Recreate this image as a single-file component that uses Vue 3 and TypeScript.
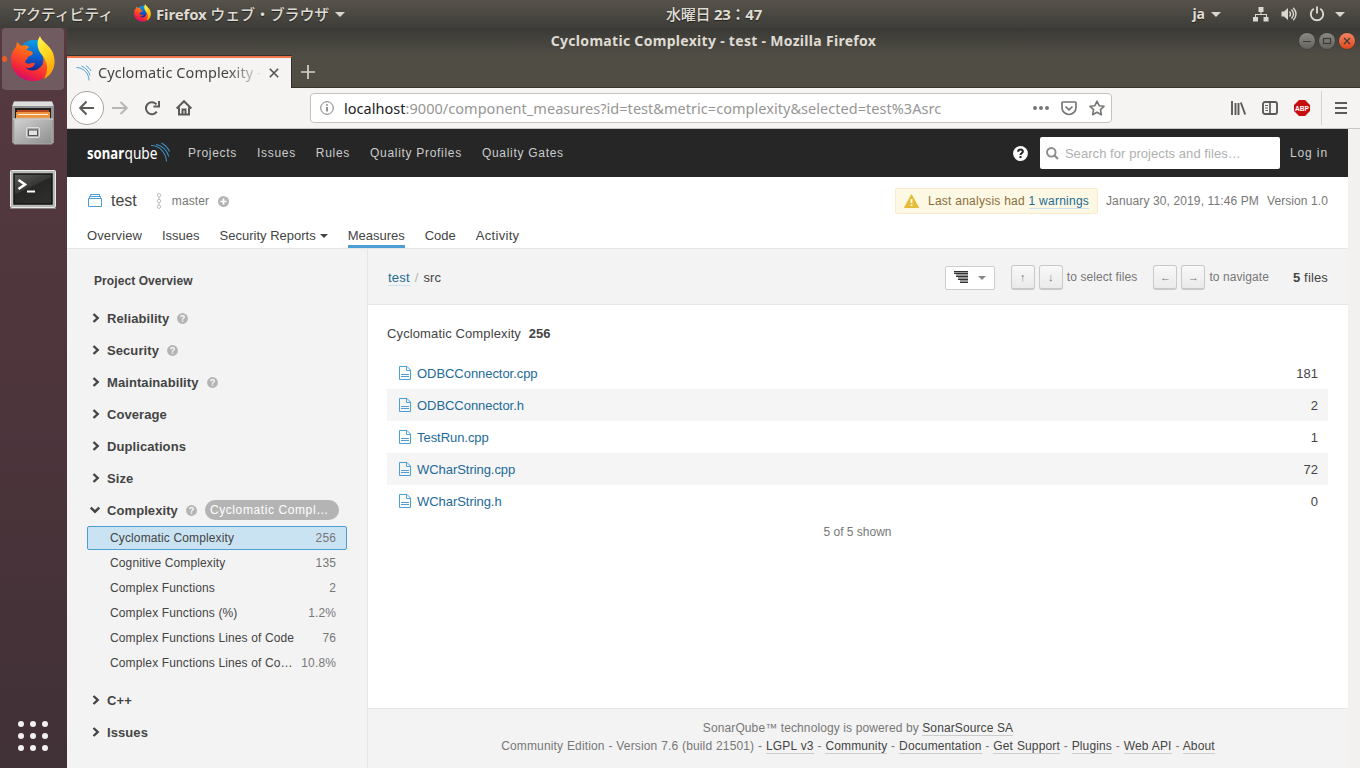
<script setup lang="ts">
interface Facet { name: string; help?: boolean }
interface Metric { name: string; value: string; selected?: boolean }
interface SourceFile { name: string; value: number }

const navItems: string[] = ['Projects', 'Issues', 'Rules', 'Quality Profiles', 'Quality Gates']
const tabs: string[] = ['Overview', 'Issues', 'Security Reports', 'Measures', 'Code', 'Activity']
const facets: Facet[] = [
  { name: 'Reliability', help: true },
  { name: 'Security', help: true },
  { name: 'Maintainability', help: true },
  { name: 'Coverage' },
  { name: 'Duplications' },
  { name: 'Size' },
]
const metrics: Metric[] = [
  { name: 'Cyclomatic Complexity', value: '256', selected: true },
  { name: 'Cognitive Complexity', value: '135' },
  { name: 'Complex Functions', value: '2' },
  { name: 'Complex Functions (%)', value: '1.2%' },
  { name: 'Complex Functions Lines of Code', value: '76' },
  { name: 'Complex Functions Lines of Code (%)', value: '10.8%' },
]
const closingFacets: Facet[] = [{ name: 'C++' }, { name: 'Issues' }]
const files: SourceFile[] = [
  { name: 'ODBCConnector.cpp', value: 181 },
  { name: 'ODBCConnector.h', value: 2 },
  { name: 'TestRun.cpp', value: 1 },
  { name: 'WCharString.cpp', value: 72 },
  { name: 'WCharString.h', value: 0 },
]
const footerLinks: string[] = ['LGPL v3', 'Community', 'Documentation', 'Get Support', 'Plugins', 'Web API', 'About']
</script>

<template>
  <div class="desktop">
    <svg class="defs" width="0" height="0">
      <defs>
        <linearGradient id="fxRed" x1="0.8" y1="0" x2="0.3" y2="1">
          <stop offset="0" stop-color="#ffb000" /><stop offset="0.45" stop-color="#ff5a1f" /><stop offset="0.8" stop-color="#f0203e" /><stop offset="1" stop-color="#c80f7a" />
        </linearGradient>
        <linearGradient id="fxYellow" x1="0.2" y1="0" x2="0.6" y2="1">
          <stop offset="0" stop-color="#fff44f" /><stop offset="0.5" stop-color="#ffd21c" /><stop offset="1" stop-color="#ff9a0a" />
        </linearGradient>
        <linearGradient id="fxBlue" x1="0.5" y1="0" x2="0.4" y2="1">
          <stop offset="0" stop-color="#0a9fe6" /><stop offset="0.5" stop-color="#0b5fd0" /><stop offset="1" stop-color="#1c1a82" />
        </linearGradient>
        <linearGradient id="metal" x1="0" y1="0" x2="1" y2="1">
          <stop offset="0" stop-color="#d2d2d2" /><stop offset="1" stop-color="#8d8d8d" />
        </linearGradient>
        <linearGradient id="screen" x1="0" y1="0" x2="0.6" y2="1">
          <stop offset="0" stop-color="#5c5c5a" /><stop offset="0.5" stop-color="#373836" /><stop offset="0.52" stop-color="#272826" /><stop offset="1" stop-color="#2d2e2c" />
        </linearGradient>
        <symbol id="firefox" viewBox="0 0 44 46">
          <circle cx="23" cy="20.500" r="16.500" fill="url(#fxBlue)" />
          <path d="M31 14 C38 18 43 19 43 24 C43 37 33 45 22 45 C9 45 0 36 0 24 C0 18 2 14 5 11 L6 6 L10 10 C13 9 16 9 18 11 L15 14 L20 15 L22 17 C22 19 18 20 17 21 C17 23 14 24 14 26 C16 29 20 27 24 27 C23 32 17 33 14 31 C19 37 29 35 32 27 C33 22 32 18 29 15 Z" fill="url(#fxRed)" />
          <path d="M29 0 C30 5 39 9 42 17 C46 28 42 38 33 43 C37 35 38 28 31 19 C26 13 25 6 29 0 Z" fill="url(#fxYellow)" />
        </symbol>
        <symbol id="help" viewBox="0 0 16 16">
          <circle cx="8" cy="8" r="7.900" fill="currentColor" />
          <path class="question" d="M5.500 6.100 C5.600 2.800 10.600 2.900 10.500 5.900 C10.500 7.600 8 7.800 8 9.700" fill="none" stroke-width="2.200" /><rect class="dot" x="6.900" y="10.700" width="2.200" height="2.200" />
        </symbol>
      </defs>
    </svg>

    <header class="panel">
      <span class="activities">アクティビティ</span>
      <svg class="panel-fox" width="17" height="18"><use href="#firefox" /></svg>
      <span class="app-name"><b>Firefox</b> ウェブ・ブラウザ</span>
      <svg class="arrow" width="10" height="5"><path d="M0 0H10L5 5Z" /></svg>
      <span class="clock">水曜日 <b>23：47</b></span>
      <div class="tray">
        <b class="lang">ja</b>
        <svg class="arrow" width="10" height="5"><path d="M0 0H10L5 5Z" /></svg>
        <svg class="net" width="16" height="16" viewBox="0 0 16 16"><path d="M5.500 1h5v5h-5zM0 11h5v4.500H0zM10.500 11H15.500V15.500H10.500zM7.500 6h1v2h5.500v3h-1V9H3v2H2V8h5.500z" fill="#dad7d0" /></svg>
        <svg class="sound" width="16" height="16" viewBox="0 0 16 16"><path d="M0.500 5.500h2.500L7 2v12L3 10.500H0.500z" fill="#dad7d0" /><path d="M8.500 5.500q2 2.500 0 5M10.500 3.500q4 4.500 0 9M12.300 1.700q5.400 6.300 0 12.600" fill="none" stroke="#dad7d0" stroke-width="1.400" /></svg>
        <svg class="power" width="16" height="16" viewBox="0 0 16 16"><path d="M4.800 2.800A6.200 6.200 0 1 0 11.200 2.800M8 0.500V7.500" fill="none" stroke="#dad7d0" stroke-width="1.900" /></svg>
        <svg class="arrow" width="10" height="5"><path d="M0 0H10L5 5Z" /></svg>
      </div>
    </header>

    <div class="workspace">
      <aside class="dock">
        <div class="dock-tile"><i class="running"></i><svg width="44" height="46"><use href="#firefox" /></svg></div>
        <svg class="cabinet" width="44" height="46" viewBox="0 0 44 46">
          <path d="M3 1.500H41L43 6V43H1V6Z" fill="#929292" /><path d="M3 1.500H41L42.500 6H1.500Z" fill="#dedede" />
          <rect x="4" y="8" width="36" height="13" fill="#20201f" /><path d="M6 10H38V13H6Z" fill="#b9471d" /><path d="M5 12H39V21H5Z" fill="#ef923e" /><path d="M7 14.500H37" stroke="#fff4e0" /><path d="M5 17H39V21H5Z" fill="#dba05c" />
          <path d="M3 19H41V44H3Z" fill="url(#metal)" stroke="#aaa" /><path d="M2 19H42" stroke="#d8d8d8" />
          <rect x="15.500" y="27.500" width="13" height="10" rx="1.500" fill="#aaa" stroke="#dedede" /><rect x="17.500" y="30" width="9" height="5.500" fill="#e2e2e2" stroke="#555" />
        </svg>
        <svg class="terminal" width="47" height="40" viewBox="0 0 47 40">
          <rect x="0.500" y="0.500" width="45" height="37" rx="1" fill="#b9b9b7" stroke="#eaeae8" /><path d="M0 38.500H46" stroke="#85807e" />
          <rect x="4" y="4" width="38" height="30" fill="url(#screen)" stroke="#151515" stroke-width="1.500" />
          <path d="M8.500 10L15 14.500L8.500 19" fill="none" stroke="#fff" stroke-width="2.600" /><path d="M17 21.500H25" stroke="#fff" stroke-width="2" />
        </svg>
        <div class="app-grid"><i v-for="n in 9" :key="n"></i></div>
      </aside>

      <div class="window">
        <div class="titlebar">
          <b class="window-title">Cyclomatic Complexity - test - Mozilla Firefox</b>
          <div class="window-buttons">
            <svg width="16" height="16" viewBox="0 0 16 16"><path d="M4 8.500H12" /></svg>
            <svg width="16" height="16" viewBox="0 0 16 16"><rect x="4.500" y="5.500" width="7" height="5" /></svg>
            <svg class="close" width="16" height="16" viewBox="0 0 16 16"><path d="M5 5L11 11M11 5L5 11" /></svg>
          </div>
        </div>
        <div class="tabstrip">
          <div class="browser-tab">
            <svg class="favicon" width="16" height="16" viewBox="0 0 16 16" fill="none" stroke="#509fd6" stroke-width="1"><path d="M0.500 2.500C7 2.500 13 8 13 15.500M5.500 1C10 3 13 6.500 14 10.500M10 0.800C12.500 2.500 14 4 15 6" /></svg>
            <span class="tab-title">Cyclomatic Complexity - test</span>
            <svg class="tab-close" width="10" height="10" viewBox="0 0 10 10"><path d="M0.800 0.800L9.200 9.200M9.200 0.800L0.800 9.200" stroke="#55534f" stroke-width="1.600" /></svg>
          </div>
          <svg class="tab-plus" width="14" height="14"><path d="M7 0V14M0 7H14" stroke="#d4d2ce" stroke-width="1.700" /></svg>
        </div>
        <div class="toolbar">
          <span class="back"><svg width="16" height="16" viewBox="0 0 16 16" class="tool"><path d="M15 8H1.500M7.500 1.500L1.200 8L7.500 14.500" /></svg></span>
          <svg width="16" height="16" viewBox="0 0 16 16" class="tool forward"><path d="M0 8H14M8.500 2L14.800 8L8.500 14" /></svg>
          <svg width="16" height="16" viewBox="0 0 16 16" class="tool reload"><path d="M12.800 11.700A6 6 0 1 1 12.500 4.300M15 1V6.500H9.500" /></svg>
          <svg width="16" height="16" viewBox="0 0 16 16" class="tool home"><path d="M0.700 8.500L8 1.200L15.300 8.500M3 7.500V14.500H13V7.500M6.500 14V9.500H9.500V14" /></svg>
          <div class="address">
            <svg class="info" width="14" height="14" viewBox="0 0 14 14"><circle cx="7" cy="7" r="6.300" fill="none" stroke="#7b7b78" /><path d="M7 6V10.500M7 3.200V4.800" stroke="#777" stroke-width="1.600" /></svg>
            <span class="url"><em>localhost</em>:9000/component_measures?id=test&amp;metric=complexity&amp;selected=test%3Asrc</span>
            <svg class="dots" width="16" height="4"><g fill="#777673"><circle cx="2" cy="2" r="2" /><circle cx="8" cy="2" r="2" /><circle cx="14" cy="2" r="2" /></g></svg>
            <svg class="pocket" width="16" height="15" viewBox="0 0 16 15" fill="none" stroke="#777673" stroke-width="1.700"><path d="M2 1H14Q15 1 15 2V6.500A7 7 0 0 1 1 6.500V2Q1 1 2 1ZM4.500 5.500L8 8.800L11.500 5.500" /></svg>
            <svg class="star" width="16" height="16" viewBox="0 0 16 16"><path d="M8 1.200L10.100 5.700L15 6.300L11.400 9.700L12.400 14.700L8 12.200L3.600 14.700L4.600 9.700L1 6.300L5.900 5.700Z" fill="none" stroke="#777673" stroke-width="1.600" stroke-linejoin="round" /></svg>
          </div>
          <svg class="library" width="16" height="16" viewBox="0 0 16 16"><path d="M2 1V15M5.500 3V15M8.500 3V15M10.800 2.500L15.200 14.500" stroke="#5b5a57" stroke-width="1.900" /></svg>
          <svg class="sidebar-icon" width="16" height="14" viewBox="0 0 16 14"><rect x="1" y="1" width="14" height="12" rx="2" fill="none" stroke="#5b5a57" stroke-width="1.900" /><path d="M8 1V13" stroke="#5b5a57" stroke-width="1.700" /><path d="M3 4.500H6M3 7H6M3.500 9.500H6" stroke="#5b5a57" /></svg>
          <svg class="adblock" width="16" height="16" viewBox="0 0 16 16"><path d="M5 0H11L16 5V11L11 16H5L0 11V5Z" fill="#c70d0d" /><text x="1" y="11" textLength="14" lengthAdjust="spacingAndGlyphs">ABP</text></svg>
          <i class="tool-divider"></i>
          <svg class="menu-icon" width="12" height="12"><path d="M0 1H12M0 6H12M0 11H12" stroke="#5b5a57" stroke-width="2" /></svg>
        </div>

        <div class="viewport">
          <div class="page">
            <nav class="sq-nav">
              <svg class="sq-logo" width="85" height="24" viewBox="0 0 85 24">
                <text x="0" y="18" class="logo-bold" textLength="37" lengthAdjust="spacingAndGlyphs">sonar</text>
                <text x="37.500" y="18" class="logo-light" textLength="33" lengthAdjust="spacingAndGlyphs">qube</text>
                <path d="M64 4.500C73 4.500 79 12 79.500 20.500M69 3.200C76 5 80 9.500 81.800 15.500M74.500 2C78 4 81 7 82.500 10.500" fill="none" stroke="#3e8dbd" stroke-width="1.100" />
              </svg>
              <div class="nav-links"><a v-for="item in navItems" :key="item">{{ item }}</a></div>
              <svg class="nav-help" width="15" height="15"><use href="#help" /></svg>
              <div class="search">
                <svg width="13" height="13" viewBox="0 0 13 13"><circle cx="5.300" cy="5.300" r="4.300" fill="none" stroke="#8c8c8c" stroke-width="1.900" /><path d="M8.300 8.300L12 12" stroke="#8c8c8c" stroke-width="2.200" /></svg>
                <span>Search for projects and files…</span>
              </div>
              <a class="login">Log in</a>
            </nav>

            <div class="project-header">
              <div class="project-line">
                <svg class="project-icon" width="14" height="14" viewBox="0 0 14 14"><path d="M0.500 5.500H13.500V13.500H0.500ZM1.500 5.500V3.500H12.500V5.500M2.500 3.500V1.500H11.500V3.500" fill="none" stroke="#4b9fd5" /></svg>
                <span class="project-name">test</span>
                <svg class="branch" width="6" height="16" viewBox="0 0 6 16" fill="none" stroke="#bdbdbd"><circle cx="3" cy="2.300" r="1.700" /><circle cx="3" cy="8" r="1.700" /><circle cx="3" cy="13.700" r="1.700" /><path d="M3 4V6.300M3 9.700V12" /></svg>
                <span class="branch-name">master</span>
                <svg class="plus" width="11" height="11" viewBox="0 0 11 11"><circle cx="5.500" cy="5.500" r="5.500" fill="#b4b4b4" /><path d="M5.500 2.500V8.500M2.500 5.500H8.500" stroke="#fff" stroke-width="1.700" /></svg>
                <div class="warning">
                  <svg width="15" height="14" viewBox="0 0 15 14"><path d="M7.500 0.700L14.500 13.500H0.500Z" fill="#e4bd39" stroke="#e4bd39" stroke-linejoin="round" /><path d="M7.500 5V9M7.500 10.300V12" stroke="#fcf8e3" stroke-width="1.800" /></svg>
                  <span>Last analysis had <a>1 warnings</a></span>
                </div>
                <span class="date">January 30, 2019, 11:46 PM</span>
                <span class="version">Version 1.0</span>
              </div>
              <div class="project-tabs">
                <a v-for="tab in tabs" :key="tab" :class="{ active: tab === 'Measures' }">{{ tab }}<svg v-if="tab === 'Security Reports'" width="8" height="4"><path d="M0 0H8L4 4Z" fill="#444" /></svg></a>
              </div>
            </div>

            <div class="content">
              <aside class="facets">
                <div class="overview">Project Overview</div>
                <div v-for="facet in facets" :key="facet.name" class="facet">
                  <svg class="chevron" width="8" height="10" viewBox="0 0 8 10"><path d="M1.500 1L5.700 5L1.500 9" /></svg>
                  <b>{{ facet.name }}</b>
                  <svg v-if="facet.help" class="hint" width="11" height="11"><use href="#help" /></svg>
                </div>
                <div class="facet open">
                  <svg class="chevron down" width="10" height="8" viewBox="0 0 10 8"><path d="M0.800 1.500L5 5.700L9.200 1.500" /></svg>
                  <b>Complexity</b>
                  <svg class="hint" width="11" height="11"><use href="#help" /></svg>
                  <span class="pill">Cyclomatic Complexity</span>
                </div>
                <div class="metrics">
                  <div v-for="metric in metrics" :key="metric.name" class="metric" :class="{ selected: metric.selected }">
                    <span class="metric-name">{{ metric.name }}</span><span class="metric-value">{{ metric.value }}</span>
                  </div>
                </div>
                <div v-for="facet in closingFacets" :key="facet.name" class="facet">
                  <svg class="chevron" width="8" height="10" viewBox="0 0 8 10"><path d="M1.500 1L5.700 5L1.500 9" /></svg>
                  <b>{{ facet.name }}</b>
                </div>
              </aside>

              <main class="main">
                <div class="main-bar">
                  <a class="crumb">test</a><span class="slash">/</span><span class="crumb-current">src</span>
                  <div class="view-select">
                    <svg width="14" height="12" viewBox="0 0 14 12"><path d="M0 0H14V12H6V9H4V6H2V3H0Z" fill="#999" /><path d="M0 0H14V1H0ZM0 2H14V3H0ZM2 5H14V6H2ZM4 8H14V9H4ZM6 11H14V12H6Z" fill="#333" /></svg>
                    <svg width="8" height="4"><path d="M0 0H8L4 4Z" fill="#888" /></svg>
                  </div>
                  <kbd>↑</kbd><kbd>↓</kbd><span class="key-label">to select files</span>
                  <kbd class="second">←</kbd><kbd>→</kbd><span class="key-label">to navigate</span>
                  <span class="file-count"><b>5</b> files</span>
                </div>
                <div class="results">
                  <div class="measure">Cyclomatic Complexity <b>256</b></div>
                  <div class="file-list">
                    <div v-for="file in files" :key="file.name" class="file-row">
                      <svg width="12" height="14" viewBox="0 0 12 14" fill="none" stroke="#4b9fd5"><path d="M0.500 0.500H8L11.500 4V13.500H0.500ZM7.500 0.500V4.500H11.500M2 8.500H10M2 10.500H10" /></svg>
                      <a>{{ file.name }}</a><span>{{ file.value }}</span>
                    </div>
                  </div>
                  <div class="shown">5 of 5 shown</div>
                </div>
                <footer class="footer">
                  <div class="powered">SonarQube™ technology is powered by <a>SonarSource SA</a></div>
                  <div class="edition">Community Edition - Version 7.6 (build 21501)<template v-for="link in footerLinks" :key="link"> - <a>{{ link }}</a></template></div>
                </footer>
              </main>
            </div>
          </div>
          <div class="scrollbar"></div>
        </div>
      </div>
    </div>
  </div>
</template>

<style>
body { margin: 0; overflow: hidden; }
</style>

<style scoped>
* { box-sizing: border-box; }
svg { flex: none; display: block; }
span, a, b { white-space: nowrap; }
.desktop { width: 1360px; height: 768px; overflow: hidden; font: 13px/20px "Liberation Sans", Arial, sans-serif; color: #444; }
.defs { position: absolute; }
.panel { position: relative; height: 28px; display: flex; align-items: center; padding-left: 12px; background: linear-gradient(#57534b, #3e3d39); color: #dfdbd2; font: 500 15px/28px "Noto Sans", "Noto Sans CJK JP", sans-serif; text-shadow: 0 1px 1px #25231f; }
.activities { width: 101px; letter-spacing: -0.200px; }
.panel-fox { margin: -3px 0 0 21px; }
.app-name { width: 173px; margin-left: 5px; letter-spacing: -0.150px; }
.arrow { fill: #dad7d0; margin-left: 6px; }
.clock { position: absolute; left: 666px; letter-spacing: -0.250px; }
.tray { margin-left: auto; display: flex; align-items: center; padding-right: 15px; }
.lang { font-size: 14px; }
.net { margin-left: 32px; }
.sound { margin-left: 12px; }
.power { margin-left: 12px; }
.power + .arrow { margin-left: 10px; }
.workspace { display: flex; height: 740px; }
.dock { width: 67px; display: flex; flex-direction: column; align-items: center; background: linear-gradient(#553a40, #4e353c 45%, #403136); padding-right: 1px; }
.dock-tile { position: relative; width: 62px; height: 62px; border-radius: 4px; background: #705c60; display: flex; align-items: center; justify-content: center; }
.running { position: absolute; left: 0; top: 28px; width: 5px; height: 6px; border-radius: 50%; background: #f15a22; }
.cabinet { margin-top: 10px; }
.terminal { margin-top: 24px; }
.app-grid { margin-top: auto; margin-bottom: 17px; display: grid; grid-template-columns: repeat(3, 6px); gap: 6px; }
.app-grid i { width: 6px; height: 6px; border-radius: 50%; background: #f2f0f0; }
.window { width: 1293px; background: #504d45; }
.titlebar { height: 27px; position: relative; display: flex; align-items: center; justify-content: center; background: linear-gradient(#3a3935, #504d45); color: #dfdbd2; }
.window-title { margin-top: -2px; font: bold 14px/26px "Noto Sans", sans-serif; letter-spacing: 0.300px; }
.window-buttons { position: absolute; right: 5px; top: 5px; display: flex; gap: 4px; }
.window-buttons svg { border-radius: 50%; background: linear-gradient(#8b8982, #65635d); fill: none; stroke: #3b3934; stroke-width: 1.200; box-shadow: 0 0 0 0.5px #34332f; }
.window-buttons .close { background: linear-gradient(#f58362, #df481c); }
.tabstrip { height: 33px; display: flex; align-items: center; background: linear-gradient(#36342f, #36342f) bottom / 100% 1px no-repeat; }
.browser-tab { width: 225px; height: 32px; align-self: flex-end; border-top: 2px solid #ef764a; border-right: 1px solid #33312d; background: #f5f4f3; display: flex; align-items: center; padding-left: 9px; box-shadow: 0 -1px 0 #35332f; }
.tab-title { width: 165px; margin: -3px 0 0 6px; overflow: hidden; font: 14.500px/24px "Noto Sans", sans-serif; letter-spacing: 0.080px; mask-image: linear-gradient(to right, #000 130px, transparent 165px); }
.tab-close { margin-left: 6px; }
.tab-plus { margin-left: 9px; }
.toolbar { height: 41px; display: flex; align-items: center; background: #f5f4f3; border-bottom: 1px solid #c8c6c3; padding-left: 3px; }
.back { width: 34px; height: 34px; border: 1px solid #a7a5a2; border-radius: 50%; background: #fff; display: flex; align-items: center; justify-content: center; }
.tool { fill: none; stroke: #5b5a57; stroke-width: 2; }
.forward { margin-left: 8px; stroke: #b8b7b5; }
.reload { margin-left: 16px; }
.home { margin-left: 16px; }
.address { width: 802px; height: 30px; margin-left: 118px; border: 1px solid #c5c2be; border-radius: 4px; background: #fff; display: flex; align-items: center; padding-left: 9px; }
.url { margin-left: 10px; width: 697px; font: 14.500px/28px "Noto Sans", sans-serif; color: #979694; letter-spacing: 0.035px; flex: none; }
.url em { font-style: normal; color: #222; }
.dots { margin-left: -8px; }
.pocket { margin-left: 12px; }
.star { margin-left: 12px; }
.library { margin-left: 118px; }
.sidebar-icon { margin-left: 16px; }
.adblock { margin-left: 16px; }
.adblock text { font: bold 8px "Liberation Sans", sans-serif; fill: #fff; }
.tool-divider { width: 1px; height: 34px; background: #d5d3d0; margin-left: 11px; }
.menu-icon { margin-left: 13px; }
.viewport { height: 639px; display: flex; }
.page { width: 1281px; display: flex; flex-direction: column; background: #fff; }
.scrollbar { width: 12px; background: #f2f1f0; }
.sq-nav { height: 48px; background: #262626; color: #ccc; display: flex; align-items: center; padding: 0 20px; font-size: 12px; letter-spacing: 0.700px; }
.sq-logo { margin-top: -1px; }
.logo-bold { font: bold 16.500px "Noto Sans", sans-serif; letter-spacing: 0; fill: #fff; }
.logo-light { font: 16.500px "Noto Sans", sans-serif; letter-spacing: 0; fill: #fff; }
.nav-links { display: flex; gap: 20px; margin-left: 16px; }
.nav-help { margin-left: auto; color: #fff; }
.nav-help, .hint { --mark: #262626; }
.question { stroke: var(--mark); }
.dot { fill: var(--mark); }
.search { width: 240px; height: 32px; margin-left: 12px; border-radius: 2px; background: #fff; display: flex; align-items: center; padding-left: 6px; color: #b0b0b0; font-size: 13px; letter-spacing: 0.060px; }
.search span { margin: 1px 0 0 6px; }
.login { margin-left: 10px; letter-spacing: 0.900px; }
.project-header { height: 72px; border-bottom: 1px solid #e6e6e6; padding: 11px 20px 0; }
.project-line { height: 26px; display: flex; align-items: center; font-size: 12px; color: #777; }
.project-icon { margin: -2px 0 0 1px; }
.project-name { margin-left: 9px; font-size: 16px; color: #444; }
.branch { margin-left: 19px; }
.branch-name { margin-left: 10px; letter-spacing: 0.100px; }
.plus { margin-left: 9px; }
.warning { height: 26px; width: 203px; margin-left: auto; border: 1px solid #faebcc; border-radius: 2px; background: #fcf8e3; display: flex; align-items: center; padding-left: 8px; color: #8a6d3b; letter-spacing: 0.250px; }
.warning span { margin-left: 9px; }
.warning a { color: #236a97; border-bottom: 1px solid #cae3f2; }
.date { margin-left: 8px; letter-spacing: 0.120px; }
.version { margin-left: 8px; letter-spacing: 0.090px; }
.project-tabs { display: flex; gap: 20px; margin-top: 10px; }
.project-tabs a { display: flex; align-items: center; height: 24px; line-height: 20px; padding-top: 2px; border-bottom: 3px solid transparent; }
.project-tabs a:nth-child(1) { letter-spacing: 0.100px; }
.project-tabs a:last-child { letter-spacing: 0.300px; }
.project-tabs a.active { border-color: #4b9fd5; }
.project-tabs svg { margin-left: 4px; }
.content { flex: 1; display: flex; min-height: 0; }
.facets { width: 301px; background: #f3f3f3; border-right: 1px solid #e6e6e6; padding: 22px 20px 0; }
.overview { font-size: 12px; font-weight: bold; margin-left: 7px; letter-spacing: 0.080px; }
.facets .overview + .facet { margin-top: 12px; }
.facet { height: 32px; display: flex; align-items: center; padding-left: 4px; }
.facet b { margin-left: 7px; letter-spacing: 0.080px; }
.chevron { margin: -2px 0 0 1px; fill: none; stroke: #444; stroke-width: 2.400; }
.facet.open { height: 31px; padding-top: 1px; }
.chevron.down { margin-left: -1px; }
.hint { margin: -2px 0 0 8px; color: #b4b4b4; --mark: #f3f3f3; }
.pill { width: 134px; height: 20px; margin: -2px 0 0 8px; padding: 0 8px 0 5px; border-radius: 10px; background: #b4b4b4; color: #fff; font-size: 12px; line-height: 20px; letter-spacing: 0.600px; overflow: hidden; text-overflow: ellipsis; }
.metrics { display: flex; flex-direction: column; gap: 1px; margin-bottom: 10px; }
.metric { width: 260px; height: 24px; display: flex; align-items: center; padding: 0 10px 0 22px; border: 1px solid transparent; border-radius: 2px; font-size: 12px; letter-spacing: 0.130px; }
.metric.selected { background: #cae3f2; border-color: #4b9fd5; }
.metric-name { flex: 1; overflow: hidden; text-overflow: ellipsis; }
.metric-value { margin-left: 7px; color: #777; }
.main { flex: 1; display: flex; flex-direction: column; }
.main-bar { height: 56px; display: flex; align-items: center; padding: 2px 20px 0 20px; background: #f3f3f3; border-bottom: 1px solid #e6e6e6; }
.crumb { color: #236a97; border-bottom: 1px solid #cae3f2; line-height: 15px; letter-spacing: 0.200px; }
.slash { margin: 0 5px; color: #b4b4b4; }
.crumb-current { letter-spacing: 0.100px; }
.view-select { width: 50px; height: 24px; margin-left: auto; border: 1px solid #cdcdcd; border-radius: 2px; background: #fff; display: flex; align-items: center; padding: 0 8px; justify-content: space-between; }
.view-select svg:first-child { margin-top: -2px; }
.view-select + kbd { margin-left: 16px; }
kbd { width: 24px; height: 25px; margin-right: 4px; border: 1px solid #c9c9c9; border-bottom-width: 2px; border-radius: 3px; background: linear-gradient(#f8f8f8, #eaeaea); text-align: center; font: 11px/22px "Liberation Sans", sans-serif; color: #777; }
kbd.second { margin-left: 16px; }
.key-label { margin-top: -2px; font-size: 12px; color: #777; letter-spacing: 0.080px; }
.file-count { margin-left: 24px; letter-spacing: 0.150px; }
.results { padding: 19px 20px 0 19px; }
.measure { letter-spacing: 0.120px; }
.measure b { margin-left: 4px; letter-spacing: 0; }
.file-list { margin-top: 13px; }
.file-row { height: 32px; display: flex; align-items: center; padding: 0 10px 0 12px; }
.file-row:nth-child(even) { background: #f5f5f5; }
.file-row a { color: #236a97; margin-left: 6px; padding-top: 2px; letter-spacing: -0.050px; }
.file-row span { margin-left: auto; padding-top: 2px; }
.shown { margin-top: 5px; text-align: center; font-size: 12px; color: #777; }
.footer { margin-top: auto; height: 60px; padding-top: 10px; border-top: 1px solid #e6e6e6; background: #f3f3f3; text-align: center; font-size: 12px; line-height: 18px; color: #777; letter-spacing: 0.110px; }
.edition { letter-spacing: 0.130px; word-spacing: 0.380px; }
.footer a { color: #444; border-bottom: 1px solid #cdcdcd; }
</style>
